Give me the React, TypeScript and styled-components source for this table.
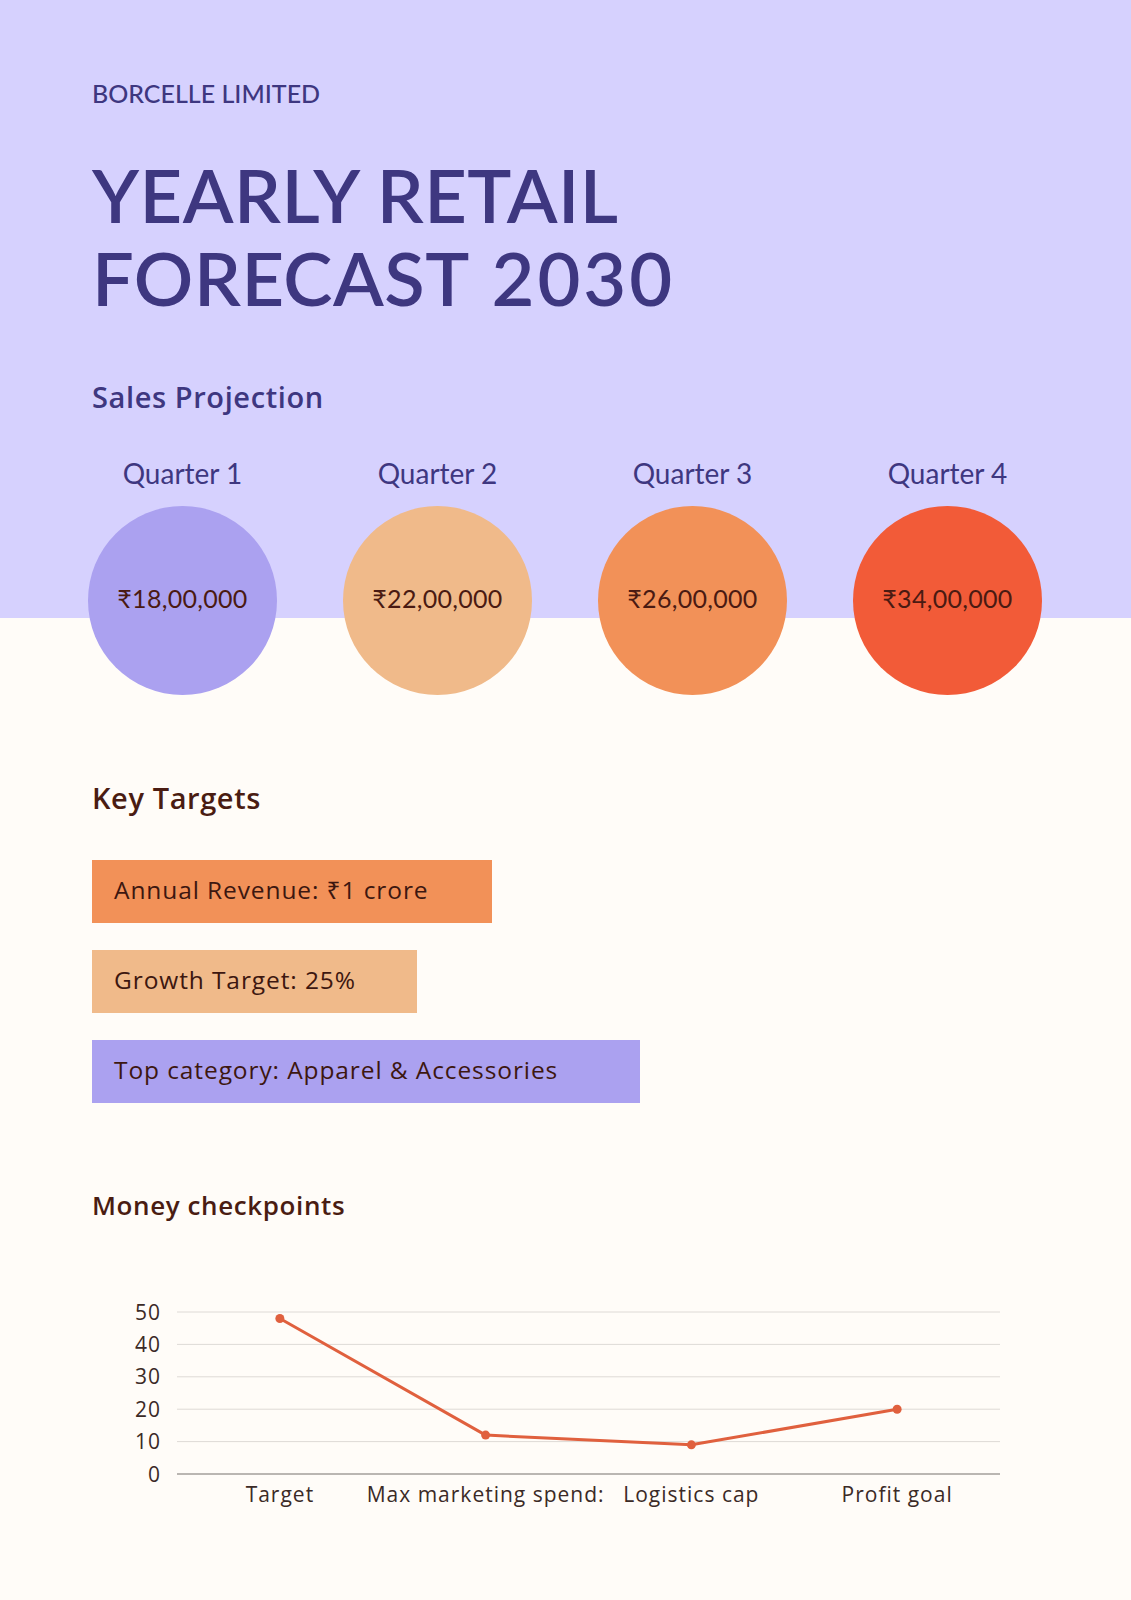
import React from 'react';
import styled, { createGlobalStyle } from 'styled-components';

const GlobalStyle = createGlobalStyle`
  html, body {
    margin: 0;
    padding: 0;
    background: #fffcf8;
  }
  * {
    box-sizing: border-box;
  }
`;

const FONT = `'Lato', 'Noto Sans', 'DejaVu Sans', sans-serif`;
const WIDE = `'Open Sans', 'Noto Sans', 'DejaVu Sans', sans-serif`;

const Page = styled.div`
  width: 1131px;
  min-height: 1600px;
  padding: 78px 0 0 92px;
  font-family: ${FONT};
  background: linear-gradient(to bottom, #d6d1fe 0, #d6d1fe 618px, #fffcf8 618px);
`;

const Company = styled.p`
  margin: 0;
  font-size: 25px;
  line-height: 30px;
  font-weight: 500;
  color: #3e3780;
`;

const Title = styled.h1`
  margin: 45px 0 0;
  font-size: 74px;
  line-height: 83px;
  font-weight: 600;
  color: #3e3780;
  letter-spacing: 0.5px;
`;

const Year = styled.span`
  margin-left: 5px;
  letter-spacing: 3px;
`;

const SectionTitle = styled.h2<{ $dark?: boolean; $top: number; $size?: number }>`
  margin: ${(p) => p.$top}px 0 0;
  font-family: ${WIDE};
  font-size: ${(p) => p.$size ?? 29}px;
  line-height: 36px;
  font-weight: 600;
  letter-spacing: 0.6px;
  color: ${(p) => (p.$dark ? '#4a1c12' : '#3e3780')};
`;

const QuarterRow = styled.div`
  display: grid;
  grid-template-columns: repeat(4, 189px);
  column-gap: 66px;
  margin: 41px 0 0 -4px;
`;

const Quarter = styled.div`
  display: flex;
  flex-direction: column;
  align-items: center;
  gap: 16px;
`;

const QuarterLabel = styled.span`
  font-size: 28px;
  line-height: 34px;
  color: #3e3780;
`;

const Circle = styled.div<{ $color: string }>`
  width: 189px;
  height: 189px;
  border-radius: 50%;
  background: ${(p) => p.$color};
  display: flex;
  align-items: center;
  justify-content: center;
  padding-bottom: 5px;
  font-size: 25px;
  letter-spacing: 0.3px;
  color: #4a1a12;
`;

const Targets = styled.div`
  display: flex;
  flex-direction: column;
  gap: 27px;
  margin-top: 44px;
`;

const TargetBar = styled.div<{ $color: string; $width: number }>`
  width: ${(p) => p.$width}px;
  height: 63px;
  display: flex;
  align-items: center;
  padding: 0 0 4px 22px;
  background: ${(p) => p.$color};
  font-family: ${WIDE};
  font-size: 24.5px;
  letter-spacing: 0.9px;
  color: #3d1710;
  white-space: nowrap;
`;

const ChartBox = styled.div`
  margin: 67px 0 0 8px;
  width: 920px;
  height: 230px;
`;

const quarters = [
  { label: 'Quarter 1', value: '₹18,00,000', color: '#aba1f0' },
  { label: 'Quarter 2', value: '₹22,00,000', color: '#f0ba8a' },
  { label: 'Quarter 3', value: '₹26,00,000', color: '#f29158' },
  { label: 'Quarter 4', value: '₹34,00,000', color: '#f25b38' },
];

const targets = [
  { text: 'Annual Revenue: ₹1 crore', color: '#f29158', width: 400 },
  { text: 'Growth Target: 25%', color: '#f0ba8a', width: 325 },
  { text: 'Top category: Apparel & Accessories', color: '#aba1f0', width: 548 },
];

const checkpoints = [
  { label: 'Target', value: 48 },
  { label: 'Max marketing spend:', value: 12 },
  { label: 'Logistics cap', value: 9 },
  { label: 'Profit goal', value: 20 },
];

// chart drawn in page coordinates (viewBox offset to match)
const X0 = 177;
const X1 = 1000;
const Y0 = 1474;
const STEP = 32.4;
const colW = (X1 - X0) / checkpoints.length;
const px = (i: number) => X0 + colW * (i + 0.5);
const py = (v: number) => Y0 - (v / 10) * STEP;

const LineChart = () => {
  const ticks = [0, 10, 20, 30, 40, 50];
  const points = checkpoints.map((c, i) => `${px(i)},${py(c.value)}`).join(' ');
  return (
    <svg width={920} height={230} viewBox="100 1290 920 230">
      {ticks.map((t) => (
        <g key={t}>
          <line
            x1={X0}
            x2={X1}
            y1={py(t)}
            y2={py(t)}
            stroke={t === 0 ? '#a39f9b' : '#dedad6'}
            strokeWidth={t === 0 ? 1.4 : 1}
          />
          <text
            x={161}
            y={py(t) + 7.5}
            textAnchor="end"
            fontFamily={WIDE}
            fontSize={21}
            letterSpacing={1}
            fill="#3b2a26"
          >
            {t}
          </text>
        </g>
      ))}
      <polyline points={points} fill="none" stroke="#e0603e" strokeWidth={3} strokeLinejoin="round" />
      {checkpoints.map((c, i) => (
        <circle key={c.label} cx={px(i)} cy={py(c.value)} r={4.5} fill="#e0603e" />
      ))}
      {checkpoints.map((c, i) => (
        <text
          key={c.label}
          x={px(i)}
          y={1502}
          textAnchor="middle"
          fontFamily={WIDE}
          fontSize={21}
          letterSpacing={1}
          fill="#3b2a26"
        >
          {c.label}
        </text>
      ))}
    </svg>
  );
};

const App = (): React.ReactElement => {
  return (
    <Page>
      <GlobalStyle />
      <Company>BORCELLE LIMITED</Company>
      <Title>
        YEARLY RETAIL
        <br />
        FORECAST <Year>2030</Year>
      </Title>
      <SectionTitle $top={60}>Sales Projection</SectionTitle>
      <QuarterRow>
        {quarters.map((q) => (
          <Quarter key={q.label}>
            <QuarterLabel>{q.label}</QuarterLabel>
            <Circle $color={q.color}>{q.value}</Circle>
          </Quarter>
        ))}
      </QuarterRow>
      <SectionTitle $dark $top={85}>
        Key Targets
      </SectionTitle>
      <Targets>
        {targets.map((t) => (
          <TargetBar key={t.text} $color={t.color} $width={t.width}>
            {t.text}
          </TargetBar>
        ))}
      </Targets>
      <SectionTitle $dark $top={84} $size={26}>
        Money checkpoints
      </SectionTitle>
      <ChartBox>
        <LineChart />
      </ChartBox>
    </Page>
  );
};

export default App;
